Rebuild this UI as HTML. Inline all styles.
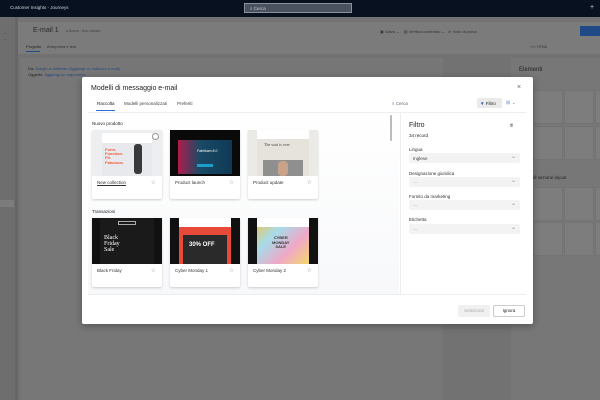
<!DOCTYPE html>
<html><head><meta charset="utf-8"><style>
*{box-sizing:border-box;margin:0;padding:0}
body{width:600px;height:400px;overflow:hidden;position:relative;font-family:"Liberation Sans",sans-serif;background:#727272;font-size:5px;color:#222}
.a{position:absolute}
.top{left:0;top:0;width:600px;height:17px;background:#08111f}
.card{position:absolute;width:70px;height:69px;background:#fff;box-shadow:0 1px 2px rgba(0,0,0,.18);border-radius:2px}
.card .img{position:absolute;left:0;top:0;width:70px;height:46px;overflow:hidden}
.card .lb{position:absolute;left:5px;top:50px;font-size:4.5px;color:#333}
.card .st{position:absolute;right:6px;top:49px;font-size:6px;color:#999}
.sel{height:10px;background:#f3f3f3;border-radius:2px;position:absolute;left:409px;width:111px;font-size:4.5px;color:#444;padding:3px 4px}
.sel:after{content:"⌄";position:absolute;right:4px;top:0px;color:#888;font-size:6px}
.fl{position:absolute;left:409px;font-size:4.5px;color:#333}
.tile{position:absolute;width:30px;height:34px;background:#7d7d7d;border:1px solid #737373}
</style></head><body>
<div class="a top"></div>
<div class="a" style="left:10px;top:5px;color:#cfd3da;font-size:4.5px">Customer Insights - Journeys</div>
<div class="a" style="left:244px;top:3px;width:108px;height:10px;background:#4a5260;border:1px solid #8a8f99;color:#c8ccd2;font-size:4.5px;padding:2px 5px">⌕ Cerca</div>
<div class="a" style="left:590px;top:4px;color:#ccc;font-size:7px">+</div>
<div class="a" style="left:0;top:17px;width:15px;height:383px;background:#6e6e6e"></div>
<div class="a" style="left:15px;top:17px;width:3px;height:383px;background:#666"></div>
<div class="a" style="left:3px;top:30px;color:#555;font-size:5px">⌄<br>⌄</div>
<div class="a" style="left:18px;top:22px;width:582px;height:32px;background:#7b7b7b"></div>
<div class="a" style="left:33px;top:27px;color:#2a2a2a;font-size:7px">E-mail 1</div>
<div class="a" style="left:66px;top:29px;color:#444;font-size:3.5px">● Bozza - Non salvato</div>
<div class="a" style="left:26px;top:44px;color:#222;font-size:4px">Progetto</div>
<div class="a" style="left:47px;top:44px;color:#333;font-size:4px">Anteprima e test</div>
<div class="a" style="left:26px;top:51px;width:14px;height:1px;background:#1f4f8a"></div>
<div class="a" style="left:380px;top:29px;color:#333;font-size:4px">▣ Salva ⌄ &nbsp;&nbsp; ▤ Verifica contenuto ⌄ &nbsp; ⊳ Invio di prova</div>
<div class="a" style="left:580px;top:26px;width:20px;height:10px;background:#1f4a86"></div>
<div class="a" style="left:530px;top:44px;color:#333;font-size:4px">&lt;/&gt; HTML</div>
<div class="a" style="left:20px;top:58px;width:423px;height:342px;background:#777"></div>
<div class="a" style="left:28px;top:66px;color:#222;font-size:4px">Da: <span style="color:#26457a">Scegli un mittente (Aggiungi un indirizzo e-mail)</span></div>
<div class="a" style="left:28px;top:72px;color:#222;font-size:4px">Oggetto: <span style="color:#26457a">Aggiungi un argomento</span></div>
<div class="a" style="left:511px;top:58px;width:89px;height:342px;background:#777"></div>
<div class="a" style="left:519px;top:67px;color:#222;font-size:6px">Elementi</div>
<div class="tile" style="left:533px;top:90px"></div><div class="tile" style="left:564px;top:90px"></div><div class="tile" style="left:595px;top:90px"></div>
<div class="tile" style="left:533px;top:126px"></div><div class="tile" style="left:564px;top:126px"></div><div class="tile" style="left:595px;top:126px"></div>
<div class="a" style="left:533px;top:175px;color:#222;font-size:4.5px">di sezione layout</div>
<div class="tile" style="left:533px;top:187px"></div><div class="tile" style="left:564px;top:187px"></div><div class="tile" style="left:595px;top:187px"></div>
<div class="tile" style="left:533px;top:222px"></div><div class="tile" style="left:564px;top:222px"></div><div class="tile" style="left:595px;top:222px"></div>
<div class="a" style="left:0;top:200px;width:14px;height:7px;background:#7c7c7c"></div>

<div class="a" style="left:82px;top:77px;width:451px;height:247px;background:#fff;border-radius:2px;box-shadow:0 2px 8px rgba(0,0,0,.3)"></div>
<div class="a" style="left:91px;top:85px;font-size:7px;color:#222">Modelli di messaggio e-mail</div>
<div class="a" style="left:517px;top:84px;font-size:7px;color:#666">×</div>
<div class="a" style="left:97px;top:101px;font-size:4.5px;color:#222">Raccolta</div>
<div class="a" style="left:124px;top:101px;font-size:4.5px;color:#444">Modelli personalizzati</div>
<div class="a" style="left:177px;top:101px;font-size:4.5px;color:#444">Preferiti</div>
<div class="a" style="left:96px;top:110px;width:19px;height:1px;background:#2a6fd0"></div>
<div class="a" style="left:88px;top:112px;width:438px;height:1px;background:#eee"></div>
<div class="a" style="left:392px;top:101px;font-size:4.5px;color:#666"><span style="color:#2a6fd0">⌕</span> Cerca</div>
<div class="a" style="left:477px;top:98px;width:25px;height:10px;background:#eaeaea;border-radius:2px;font-size:4.5px;padding:2.5px 3px;color:#222"><span style="color:#1f5fbf">▼</span> Filtro</div>
<div class="a" style="left:506px;top:100px;font-size:5px;color:#5a8ad8">⊞ <span style="color:#888">⌄</span></div>
<div class="a" style="left:88px;top:113px;width:311px;height:182px;background:linear-gradient(#fff,#f7f8fa)"></div>
<div class="a" style="left:390px;top:115px;width:2px;height:26px;background:#bbb;border-radius:1px"></div>
<div class="a" style="left:400px;top:113px;width:1px;height:182px;background:#eee"></div>
<div class="a" style="left:88px;top:294px;width:438px;height:1px;background:#eee"></div>

<div class="a" style="left:92px;top:121px;font-size:4.5px;color:#222">Nuovo prodotto</div>
<div class="a" style="left:92px;top:209px;font-size:4.5px;color:#222">Transazioni</div>

<div class="card" style="left:92px;top:130px"><div class="img" style="background:#eceef0"><div class="a" style="left:10px;top:3px;width:50px;height:10px;background:#fff"></div><div class="a" style="left:10px;top:13px;width:50px;height:33px;background:#e7e9ec"></div><div class="a" style="left:13px;top:18px;color:#f25a38;font-size:4px;line-height:4.2px;font-weight:bold">Form.<br>Function.<br>Fit.<br>Fabulous.</div><div class="a" style="left:42px;top:14px;width:8px;height:30px;background:#3a3a3a;border-radius:3px"></div><div class="a" style="left:60px;top:3px;width:7px;height:7px;border:1px solid #999;border-radius:50%;background:#fff"></div></div><div class="lb" style="text-decoration:underline">New collection</div><div class="st">☆</div></div>
<div class="card" style="left:170px;top:130px"><div class="img" style="background:#0a0a0a"><div class="a" style="left:8px;top:10px;width:54px;height:34px;background:linear-gradient(90deg,#b01c4a,#1a4a66 40%,#0f3a55)"></div><div class="a" style="left:27px;top:19px;color:#fff;font-size:3.5px">Fabrikam 8.0</div><div class="a" style="left:27px;top:34px;width:16px;height:3px;background:#1aa0c8"></div></div><div class="lb">Product launch</div><div class="st">☆</div></div>
<div class="card" style="left:248px;top:130px"><div class="img" style="background:#eceae6"><div class="a" style="left:9px;top:0;width:52px;height:46px;background:#e6e2dc"></div><div class="a" style="left:9px;top:0;width:52px;height:9px;background:#fff"></div><div class="a" style="left:16px;top:12px;font-family:'Liberation Serif',serif;font-size:4px;color:#444">The wait is over</div><div class="a" style="left:15px;top:30px;width:40px;height:16px;background:#8f8f8f"></div><div class="a" style="left:30px;top:31px;width:10px;height:15px;background:#c9a28a;border-radius:4px"></div></div><div class="lb">Product update</div><div class="st">☆</div></div>

<div class="card" style="left:92px;top:218px"><div class="img" style="background:#111"><div class="a" style="left:8px;top:0;width:54px;height:46px;background:#1a1a1a"></div><div class="a" style="left:26px;top:3px;width:18px;height:4px;border:1px solid #aaa"></div><div class="a" style="left:12px;top:17px;color:#fff;font-family:'Liberation Serif',serif;font-size:6px;line-height:6px">Black<br>Friday<br>Sale</div></div><div class="lb">Black Friday</div><div class="st">☆</div></div>
<div class="card" style="left:170px;top:218px"><div class="img" style="background:#111"><div class="a" style="left:9px;top:0;width:52px;height:46px;background:#e84a3a"></div><div class="a" style="left:9px;top:0;width:52px;height:9px;background:#fff"></div><div class="a" style="left:13px;top:17px;width:44px;height:29px;background:#2a2a2a"></div><div class="a" style="left:19px;top:24px;color:#fff;font-size:6px;font-weight:bold">30% OFF</div></div><div class="lb">Cyber Monday 1</div><div class="st">☆</div></div>
<div class="card" style="left:248px;top:218px"><div class="img" style="background:#111"><div class="a" style="left:9px;top:0;width:52px;height:46px;background:linear-gradient(135deg,#f6c34a,#a6dbe8,#f0a8c8,#f3d86a)"></div><div class="a" style="left:9px;top:0;width:52px;height:9px;background:#fff"></div><div class="a" style="left:24px;top:18px;color:#333;font-size:4px;font-weight:bold;text-align:center;line-height:4.5px">CYBER<br>MONDAY<br>SALE</div></div><div class="lb">Cyber Monday 2</div><div class="st">☆</div></div>

<div class="a" style="left:409px;top:122px;font-size:7px;color:#222">Filtro</div>
<div class="a" style="left:510px;top:123px;font-size:5px;color:#555">⩸</div>
<div class="a" style="left:409px;top:133px;font-size:4.5px;color:#222">34 record</div>
<div class="fl" style="top:147px">Lingua</div>
<div class="sel" style="top:153px">Inglese</div>
<div class="fl" style="top:171px">Designazione giuridica</div>
<div class="sel" style="top:177px;color:#aaa">---</div>
<div class="fl" style="top:194px">Fornito da marketing</div>
<div class="sel" style="top:200px;color:#aaa">---</div>
<div class="fl" style="top:217px">Etichetta</div>
<div class="sel" style="top:224px;color:#aaa">---</div>

<div class="a" style="left:458px;top:305px;width:32px;height:12px;background:#f0f0f0;border-radius:2px;font-size:4.5px;color:#aaa;text-align:center;line-height:12px">Seleziona</div>
<div class="a" style="left:493px;top:305px;width:32px;height:12px;background:#fff;border:1px solid #ccc;border-radius:2px;font-size:4.5px;color:#222;text-align:center;line-height:10px">Ignora</div>
</body></html>
